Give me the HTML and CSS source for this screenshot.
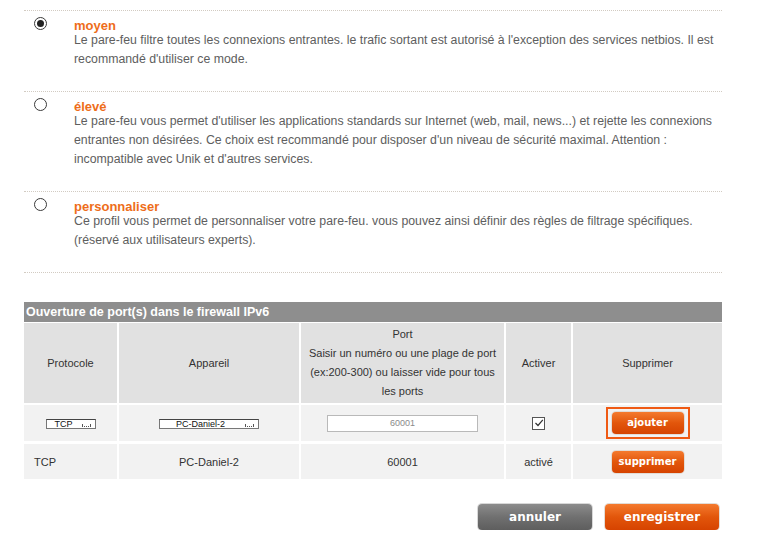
FILE: index.html
```html
<!DOCTYPE html>
<html lang="fr">
<head>
<meta charset="utf-8">
<title>Pare-feu</title>
<link rel="stylesheet" href="styles.css">
</head>
<body>
<div class="page">
  <div class="options">
    <div class="option">
      <span class="radio checked"></span>
      <div class="opt-body">
        <div class="opt-title">moyen</div>
        <div class="opt-text">Le pare-feu filtre toutes les connexions entrantes. le trafic sortant est autorisé à l'exception des services netbios. Il est recommandé d'utiliser ce mode.</div>
      </div>
    </div>
    <div class="option">
      <span class="radio"></span>
      <div class="opt-body">
        <div class="opt-title">élevé</div>
        <div class="opt-text">Le pare-feu vous permet d'utiliser les applications standards sur Internet (web, mail, news...) et rejette les connexions entrantes non désirées. Ce choix est recommandé pour disposer d'un niveau de sécurité maximal. Attention : incompatible avec Unik et d'autres services.</div>
      </div>
    </div>
    <div class="option">
      <span class="radio"></span>
      <div class="opt-body">
        <div class="opt-title">personnaliser</div>
        <div class="opt-text">Ce profil vous permet de personnaliser votre pare-feu. vous pouvez ainsi définir des règles de filtrage spécifiques. (réservé aux utilisateurs experts).</div>
      </div>
    </div>
  </div>

  <table class="ports">
    <colgroup>
      <col class="c1"><col class="c2"><col class="c3"><col class="c4"><col class="c5">
    </colgroup>
    <tr><th class="title" colspan="5">Ouverture de port(s) dans le firewall IPv6</th></tr>
    <tr class="head">
      <td>Protocole</td>
      <td>Appareil</td>
      <td class="port-head">Port<br>Saisir un numéro ou une plage de port<br>(ex:200-300) ou laisser vide pour tous<br>les ports</td>
      <td>Activer</td>
      <td>Supprimer</td>
    </tr>
    <tr class="edit">
      <td><span class="sel sel-proto">TCP<span class="dots"></span></span></td>
      <td><span class="sel sel-dev">PC-Daniel-2<span class="dots"></span></span></td>
      <td><span class="txt">60001</span></td>
      <td><span class="chk"><svg width="10" height="10" viewBox="0 0 10 10"><path d="M1.5 5 L4 7.5 L8.8 1.8" fill="none" stroke="#333" stroke-width="1.2"/></svg></span></td>
      <td><span class="focus"><span class="btn small">ajouter</span></span></td>
    </tr>
    <tr class="data">
      <td class="left">TCP</td>
      <td>PC-Daniel-2</td>
      <td>60001</td>
      <td>activé</td>
      <td><span class="btn small">supprimer</span></td>
    </tr>
  </table>

  <div class="actions">
    <span class="btn big grey">annuler</span>
    <span class="btn big">enregistrer</span>
  </div>
</div>
</body>
</html>
```
FILE: styles.css
```css
html, body { margin: 0; padding: 0; background: #fff; }
body {
  font-family: "Liberation Sans", Arial, sans-serif;
  color: #5a5a5a;
}
.page {
  width: 698px;
  padding: 10px 0 0 24px;
}
.options {
  border-bottom: 1px dotted #d2cbc2;
}
.option {
  display: flex;
  border-top: 1px dotted #d2cbc2;
  padding: 6px 0 22px 10px;
}
.radio {
  flex: none;
  box-sizing: border-box;
  width: 13px;
  height: 13px;
  border: 1px solid #3a3a3a;
  border-radius: 50%;
  margin-right: 27px;
  position: relative;
  background: #fff;
}
.radio.checked::after {
  content: "";
  position: absolute;
  left: 2px;
  top: 2px;
  width: 7px;
  height: 7px;
  border-radius: 50%;
  background: #222;
}
.opt-title {
  color: #ee6d1a;
  font-weight: bold;
  font-size: 13px;
  line-height: 10px;
  margin-top: 4px;
}
.opt-text {
  font-size: 12.3px;
  line-height: 19px;
  color: #5e5e5e;
}
.ports {
  margin-top: 29px;
  width: 698px;
  border-collapse: collapse;
  table-layout: fixed;
  font-size: 11px;
  color: #333;
}
.c1 { width: 94px; }
.c2 { width: 182px; }
.c3 { width: 205px; }
.c4 { width: 67px; }
.c5 { width: 150px; }
.ports th.title {
  background: #8e8e8e;
  color: #fff;
  font-size: 12.5px;
  font-weight: bold;
  text-align: left;
  height: 20px;
  padding: 0 2px;
  border-bottom: 1px solid #fff;
}
.ports td {
  border-left: 2px solid #fff;
  text-align: center;
  padding: 0 8px;
}
.ports td:first-child { border-left: 0; }
.head td {
  background: #e1e1e1;
  line-height: 19px;
  height: 80px;
  padding: 0 2px;
}
.head td.port-head { white-space: nowrap; }
.edit td {
  background: #f2f2f2;
  height: 36px;
  border-top: 2px solid #fff;
}
.data td {
  background: #f2f2f2;
  height: 35px;
  border-top: 3px solid #fff;
  font-size: 11px;
}
.data td.left { text-align: left; padding-left: 10px; }
.sel {
  display: inline-block;
  position: relative;
  box-sizing: border-box;
  height: 10px;
  border: 1px solid #777;
  border-top-color: #444;
  font-size: 9px;
  line-height: 8px;
  text-align: left;
  color: #111;
  background: #fff;
  vertical-align: middle;
}
.sel-proto { width: 50px; padding-left: 8px; }
.sel-dev { width: 100px; padding-left: 16px; }
.dots {
  position: absolute;
  right: 4px;
  bottom: 1px;
  width: 7px;
  height: 2px;
  border-left: 1px solid #555;
  border-right: 1px solid #555;
  border-bottom: 1px dotted #555;
}
.txt {
  display: inline-block;
  box-sizing: border-box;
  width: 151px;
  height: 17px;
  border: 1px solid #b9b9b9;
  background: #fff;
  font-size: 9px;
  line-height: 15px;
  color: #8a8a8a;
  vertical-align: middle;
}
.chk {
  display: inline-flex;
  align-items: center;
  justify-content: center;
  box-sizing: border-box;
  width: 13px;
  height: 13px;
  border: 1px solid #555;
  background: #fff;
  vertical-align: middle;
}
.focus {
  display: inline-block;
  border: 2px solid #ef5a14;
  padding: 3px 4px;
  vertical-align: middle;
}
.btn {
  display: inline-block;
  box-sizing: border-box;
  font-family: "DejaVu Sans", Verdana, sans-serif;
  font-weight: bold;
  color: #fff;
  text-align: center;
  border-radius: 4px;
  background: linear-gradient(#f47a2e, #e2560b 50%, #d64300);
  box-shadow: 0 0 0 1px #e2dcd6;
  vertical-align: middle;
}
.btn.small {
  width: 72px;
  height: 22px;
  line-height: 22px;
  font-size: 10px;
}
.actions {
  display: flex;
  justify-content: flex-end;
  gap: 13px;
  margin-top: 25px;
  padding-right: 3px;
}
.btn.big {
  width: 114px;
  height: 26px;
  line-height: 26px;
  font-size: 12px;
}
.btn.grey {
  background: linear-gradient(#8c8c8c, #707070 50%, #5e5e5e);
  box-shadow: 0 0 0 1px #d8d8d8;
}
```
